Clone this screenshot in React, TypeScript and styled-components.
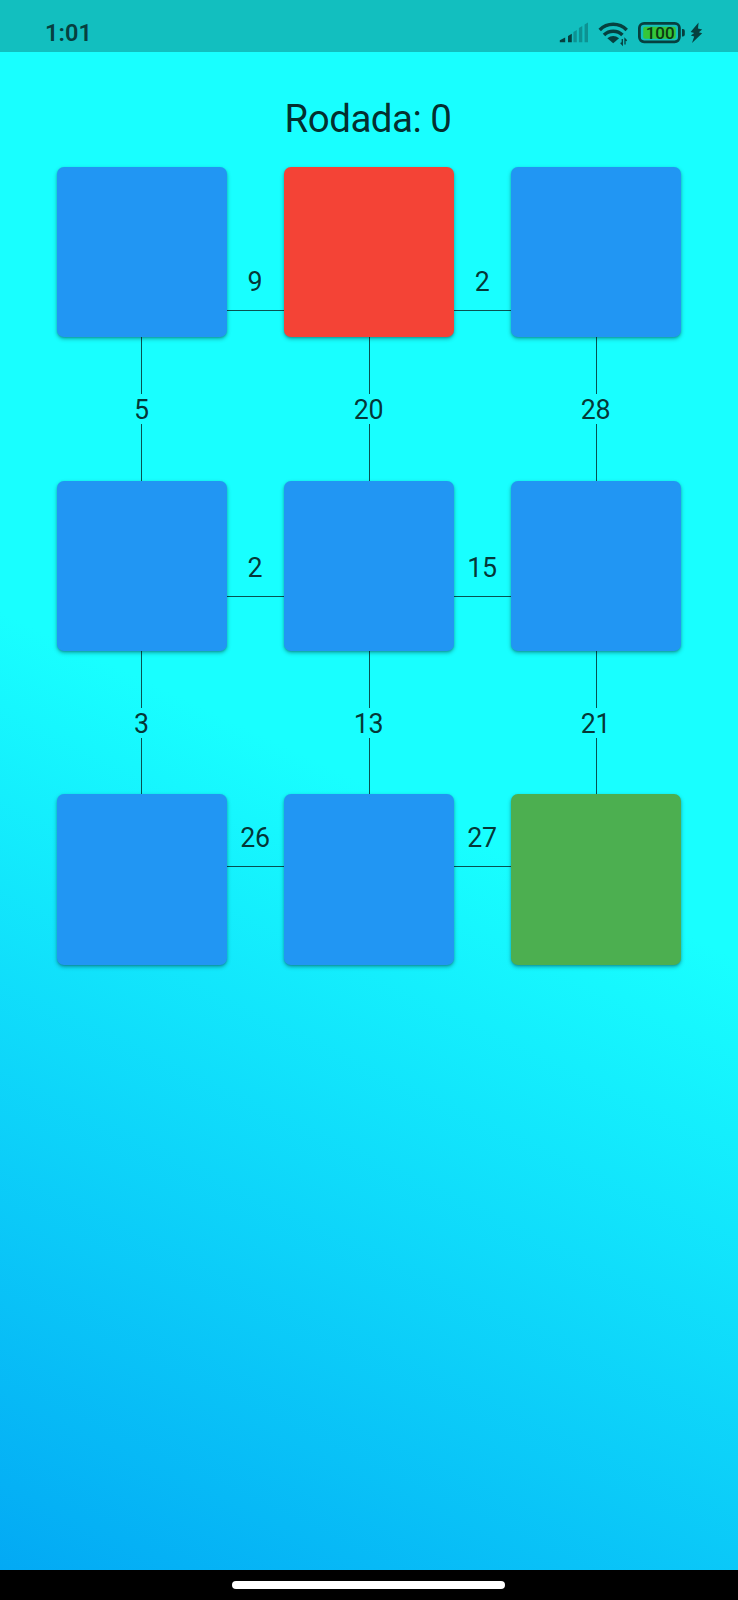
import React from "react";
import styled, { createGlobalStyle } from "styled-components";

const GlobalStyle = createGlobalStyle`
  *, *::before, *::after { box-sizing: border-box; }
  body { margin: 0; background: #000; font-family: Roboto, "Liberation Sans", sans-serif; }
`;

const Phone = styled.div`
  width: 738px;
  height: 1600px;
  display: flex;
  flex-direction: column;
  background: #000;
`;

const Screen = styled.main`
  height: 1570px;
  flex: none;
  display: flex;
  flex-direction: column;
  background: linear-gradient(25.18deg, #03a9f4 0%, #18ffff 50%);
`;

const StatusBar = styled.header`
  height: 52px;
  flex: none;
  display: flex;
  justify-content: space-between;
  padding: 18px 30px 0 45px;
  background: rgba(0, 0, 0, 0.25);
  color: #06403f;
`;

const Clock = styled.time`
  font-size: 23.5px;
  line-height: 30px;
  font-weight: 600;
  letter-spacing: 0.1px;
`;

const StatusIcons = styled.svg`
  width: 152px;
  height: 30px;
  display: block;
`;

const Title = styled.h1`
  margin: 43px 0 0;
  height: 72px;
  padding-right: 2px;
  text-align: center;
  font-size: 38.5px;
  line-height: 48px;
  font-weight: 400;
  letter-spacing: -0.5px;
  color: rgba(0, 0, 0, 0.84);
`;

const Board = styled.section`
  display: flex;
  flex-direction: column;
  padding: 0 calc(100% / 13);
`;

const BoardRow = styled.div`
  display: flex;
  align-items: flex-start;
`;

const Column = styled.div`
  flex: 3 1 0;
  display: flex;
  flex-direction: column;
  align-items: center;
`;

const Card = styled.div<{ $color: string }>`
  width: 100%;
  aspect-ratio: 1;
  border-radius: 7px;
  background: ${(p) => p.$color};
  box-shadow: 0 2px 4px rgba(0, 0, 0, 0.3), 0 1px 2px rgba(0, 0, 0, 0.16);
`;

const Weight = styled.span`
  height: 30px;
  padding: 1px 1px 0 0;
  font-size: 26.8px;
  line-height: 30px;
  letter-spacing: -0.3px;
  color: rgba(0, 0, 0, 0.8);
`;

const VerticalLine = styled.div`
  width: 1px;
  height: 56.7px;
  background: rgba(0, 0, 0, 0.68);
`;

const HorizontalLink = styled.div<{ $top: number }>`
  flex: 1 1 0;
  display: flex;
  flex-direction: column;
  align-items: center;
  gap: 14px;
  padding-top: ${(p) => p.$top}px;
`;

const HorizontalLine = styled.div`
  width: 100%;
  height: 1px;
  background: rgba(0, 0, 0, 0.68);
`;

const NavigationBar = styled.footer`
  flex: 1;
  display: flex;
  justify-content: center;
  align-items: flex-start;
  padding: 11px 1px 0 0;
`;

const HomeIndicator = styled.div`
  width: 273px;
  height: 7.5px;
  border-radius: 4px;
  background: #fff;
`;

const BLUE = "#2196f3";
const RED = "#f44336";
const GREEN = "#4caf50";

const rows = [
  { cards: [BLUE, RED, BLUE], across: [9, 2], down: [5, 20, 28], top: 99 },
  { cards: [BLUE, BLUE, BLUE], across: [2, 15], down: [3, 13, 21], top: 71 },
  { cards: [BLUE, BLUE, GREEN], across: [26, 27], down: [], top: 28 },
];

function Indicators() {
  return (
    <StatusIcons viewBox="0 0 152 30">
      <g fill="currentColor">
        <path d="M3.8 24.3v-2l5.4-2.8v4.8z" />
        <path d="M12 24.3V18l3.8-2.2v8.5z" />
        <path d="M17.4 24.3V14l3.4-2v12.3zM22.9 24.3V10l3.4-2v16.3zM28.6 24.3V6.5l3.4-2v19.8z" opacity=".35" />
      </g>
      <g fill="none" stroke="currentColor" strokeWidth="3.5">
        <path d="M43.7 11.9a19 19 0 0 1 27 0M48 17a13 13 0 0 1 18.4 0" />
      </g>
      <path d="M51.3 20.3q5.9-4.6 11.8 0l-5.9 5z" fill="currentColor" />
      <path d="M66.3 21v5.5l-1.6-1.8M69 26.5V21l1.7 1.8" fill="none" stroke="currentColor" strokeWidth="1.3" />
      <rect x="83.4" y="5.4" width="40" height="18.4" rx="4.7" fill="none" stroke="currentColor" strokeWidth="2.8" />
      <rect x="87.2" y="8.7" width="32.6" height="12" rx="1.8" fill="#35c63a" />
      <path d="M126 11h.9q1.9 0 1.9 1.9v3.6q0 1.9-1.9 1.9h-.9z" fill="currentColor" />
      <text x="104.2" y="20.8" textAnchor="middle" fontSize="17" fontWeight="500" fill="#0b3a12">100</text>
      <path d="M142.6 4.4l-8 9.6 3.6 1-3.4 2.6 3.4.9-2.2 6.4 10.2-9.7-3.4-1 3.4-2.8-4.2-1z" fill="currentColor" />
    </StatusIcons>
  );
}

export default function App() {
  return (
    <>
      <GlobalStyle />
      <Phone>
        <Screen>
          <StatusBar>
            <Clock>1:01</Clock>
            <Indicators />
          </StatusBar>
          <Title>Rodada: 0</Title>
          <Board>
            {rows.map((row, r) => (
              <BoardRow key={r}>
                {row.cards.map((color, c) => (
                  <React.Fragment key={c}>
                    <Column>
                      <Card $color={color} />
                      {row.down[c] !== undefined && (
                        <>
                          <VerticalLine />
                          <Weight>{row.down[c]}</Weight>
                          <VerticalLine />
                        </>
                      )}
                    </Column>
                    {c < 2 && (
                      <HorizontalLink $top={row.top}>
                        <Weight>{row.across[c]}</Weight>
                        <HorizontalLine />
                      </HorizontalLink>
                    )}
                  </React.Fragment>
                ))}
              </BoardRow>
            ))}
          </Board>
        </Screen>
        <NavigationBar>
          <HomeIndicator />
        </NavigationBar>
      </Phone>
    </>
  );
}
